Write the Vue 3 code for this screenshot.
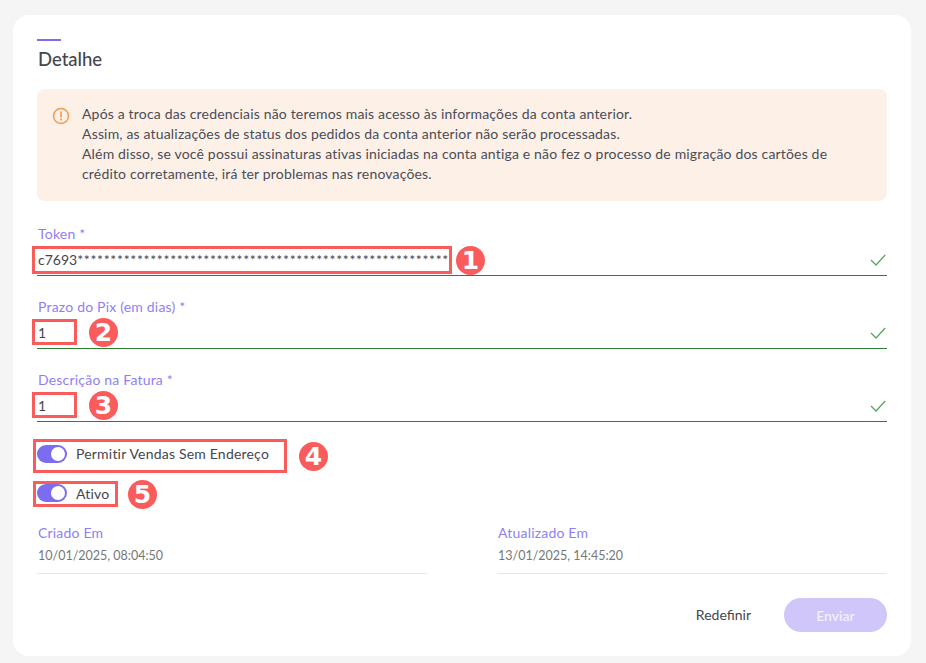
<script setup>
const stars = '*'.repeat(56)
const alertLines = [
  'Após a troca das credenciais não teremos mais acesso às informações da conta anterior.',
  'Assim, as atualizações de status dos pedidos da conta anterior não serão processadas.',
  'Além disso, se você possui assinaturas ativas iniciadas na conta antiga e não fez o processo de migração dos cartões de',
  'crédito corretamente, irá ter problemas nas renovações.'
]
const fields = [
  { label: 'Token *', value: 'c7693', masked: stars, box: 'box1', badge: '1', badgeClass: 'badge1' },
  { label: 'Prazo do Pix (em dias) *', value: '1', masked: '', box: 'box2', badge: '2', badgeClass: 'badge2' },
  { label: 'Descrição na Fatura *', value: '1', masked: '', box: 'box2', badge: '3', badgeClass: 'badge2' }
]
</script>

<template>
  <div class="page">
    <section class="card">
      <div class="accent"></div>
      <h2 class="title">Detalhe</h2>
      <div class="alert">
        <svg class="alert-icon" width="18" height="18" viewBox="0 0 18 18" fill="none">
          <circle cx="9" cy="9" r="7.500" stroke="#f2994a" stroke-width="1.400" />
          <path d="M9 5v5" stroke="#f2994a" stroke-width="1.600" stroke-linecap="round" />
          <circle cx="9" cy="12.600" r="1" fill="#f2994a" />
        </svg>
        <div class="alert-text">
          <div v-for="line in alertLines" :key="line">{{ line }}</div>
        </div>
      </div>

      <div class="fields">
        <div v-for="f in fields" :key="f.label" class="field">
          <label class="label field-label">{{ f.label }}</label>
          <div class="input-row">
            <span class="value">{{ f.value }}<span class="masked">{{ f.masked }}</span></span>
            <svg class="check" width="16" height="12" viewBox="0 0 16 12" fill="none">
              <path d="M1 6l5 5L15.200 1" stroke="#5aa469" stroke-width="1.300" />
            </svg>
            <i class="mark" :class="f.box"></i>
            <b class="badge" :class="f.badgeClass">{{ f.badge }}</b>
          </div>
        </div>
      </div>

      <div class="toggle-row first">
        <span class="switch"><span class="thumb"></span></span>
        <span class="toggle-label">Permitir Vendas Sem Endereço</span>
        <i class="mark box4"></i>
        <b class="badge badge4">4</b>
      </div>
      <div class="toggle-row second">
        <span class="switch"><span class="thumb"></span></span>
        <span class="toggle-label">Ativo</span>
        <i class="mark box5"></i>
        <b class="badge badge5">5</b>
      </div>

      <div class="dates">
        <div class="date">
          <div class="label">Criado Em</div>
          <div class="date-value">10/01/2025, 08:04:50</div>
        </div>
        <div class="date">
          <div class="label">Atualizado Em</div>
          <div class="date-value">13/01/2025, 14:45:20</div>
        </div>
      </div>

      <div class="actions">
        <button class="reset" type="button">Redefinir</button>
        <button class="send" type="button">Enviar</button>
      </div>
    </section>
  </div>
</template>

<style>
html, body { margin: 0; background: #f5f5f5; }
</style>

<style scoped>
.page {
  width: 926px;
  height: 663px;
  box-sizing: border-box;
  padding: 15px 15px 7px 13px;
  background: #f5f5f5;
  font-family: Lato, "Noto Sans", sans-serif;
  color: #3f4250;
}
.card {
  box-sizing: border-box;
  width: 898px;
  height: 641px;
  background: #fff;
  border-radius: 16px;
  padding: 24px 24px 0;
}
.accent { width: 24px; height: 2px; background: #7c6cf0; }
.title {
  margin: 7px 0 0 1px;
  font-size: 18.500px;
  line-height: 22px;
  font-weight: 500;
  color: #44464f;
}
.alert {
  display: flex;
  margin-top: 19px;
  height: 112px;
  box-sizing: border-box;
  padding: 15px 16px;
  background: #fdf0e6;
  border-radius: 8px;
}
.alert-icon { margin: 3px 1px 0 -1px; flex: none; }
.alert-text {
  margin-left: 11px;
  font-size: 14px;
  line-height: 20px;
  color: #4a4c57;
  letter-spacing: 0.170px;
}
.fields { margin-top: 24px; }
.field { height: 73px; }
.label {
  display: block;
  padding-left: 1px;
  font-size: 14px;
  line-height: 20px;
  letter-spacing: 0.200px;
  color: #8f7ff5;
}
.field-label { line-height: 18px; }
.input-row {
  position: relative;
  display: flex;
  align-items: center;
  justify-content: space-between;
  height: 33px;
  box-sizing: border-box;
  border-bottom: 1px solid #2e7d32;
  padding: 0 1px;
}
.value { font-size: 14px; color: #44464f; white-space: nowrap; }
.masked { letter-spacing: 0.690px; }
.check { margin-top: 1px; }
.mark {
  position: absolute;
  box-sizing: border-box;
  border: 3px solid #fa5c5c;
  pointer-events: none;
}
.badge {
  position: absolute;
  width: 29px;
  height: 29px;
  border-radius: 50%;
  background: #fa5c5c;
  color: #fff;
  font: 700 25px/29px "DejaVu Sans", sans-serif;
  text-align: center;
}
.box1 { left: -5px; top: 3px; width: 420px; height: 28px; }
.box2 { left: -5px; top: 3px; width: 45px; height: 26px; }
.badge1 { left: 419px; top: 3px; }
.badge2 { left: 52px; top: 2px; }
.toggle-row {
  position: relative;
  display: flex;
  align-items: center;
  gap: 9px;
  height: 18px;
}
.first { margin-top: 1px; }
.second { margin-top: 21px; }
.switch {
  width: 30px;
  height: 18px;
  border-radius: 9px;
  background: #7c6cf0;
  display: flex;
  align-items: center;
  justify-content: flex-end;
  padding-right: 2px;
  box-sizing: border-box;
}
.thumb { width: 14px; height: 14px; border-radius: 50%; background: #fff; }
.toggle-label { margin-top: -2px; font-size: 14px; color: #44464f; letter-spacing: 0.200px; }
.second .toggle-label { margin-top: 0; }
.box4 { left: -4px; top: -6px; width: 254px; height: 34px; }
.box5 { left: -4px; top: -3px; width: 85px; height: 26px; }
.badge4 { left: 262px; top: -3px; }
.badge5 { left: 91px; top: -4px; }
.dates { display: flex; justify-content: space-between; margin-top: 21px; }
.date {
  width: 390px;
  height: 51px;
  box-sizing: border-box;
  border-bottom: 1px solid #e8e8e8;
}
.date-value { margin-top: 3px; padding-left: 1px; font-size: 12.500px; line-height: 20px; color: #777; }
.actions {
  display: flex;
  justify-content: flex-end;
  align-items: center;
  margin-top: 24px;
}
.reset {
  border: 0;
  background: none;
  padding: 0;
  margin: 0 33px 2px 0;
  font: 14px Lato, sans-serif;
  color: #44464f;
}
.send {
  width: 103px;
  height: 34px;
  border: 0;
  border-radius: 17px;
  background: #d0c6f9;
  color: #f3f0ff;
  font: 600 14px Lato, sans-serif;
}
</style>
